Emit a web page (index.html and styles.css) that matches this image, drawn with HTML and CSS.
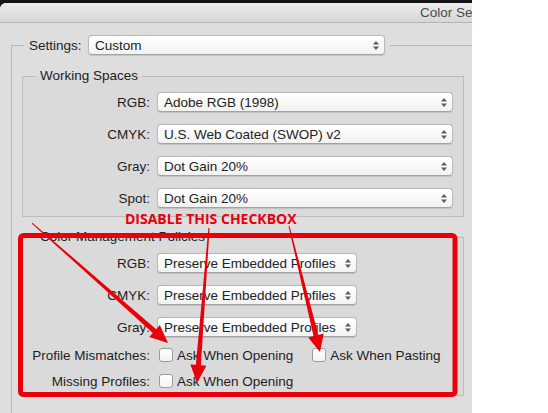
FILE: index.html
```html
<!DOCTYPE html>
<html>
<head>
<meta charset="utf-8">
<link rel="stylesheet" href="styles.css">
</head>
<body>
<div class="screen">
  <div class="window">
    <div class="titlebar">Color Settings</div>
    <fieldset class="outer">
      <legend class="settings">
        <span class="set-label">Settings:</span>
        <div class="popup popup-settings"><span>Custom</span><svg class="updown" viewBox="0 0 6 9"><path d="M0 3.5L3 0L6 3.5Z M0 5.5L3 9L6 5.5Z"/></svg></div>
      </legend>
      <fieldset class="group">
        <legend>Working Spaces</legend>
        <div class="rows">
          <span class="lbl">RGB:</span>
          <div class="popup popup-wide"><span>Adobe RGB (1998)</span><svg class="updown" viewBox="0 0 6 9"><path d="M0 3.5L3 0L6 3.5Z M0 5.5L3 9L6 5.5Z"/></svg></div>
          <span class="lbl">CMYK:</span>
          <div class="popup popup-wide"><span>U.S. Web Coated (SWOP) v2</span><svg class="updown" viewBox="0 0 6 9"><path d="M0 3.5L3 0L6 3.5Z M0 5.5L3 9L6 5.5Z"/></svg></div>
          <span class="lbl">Gray:</span>
          <div class="popup popup-wide"><span>Dot Gain 20%</span><svg class="updown" viewBox="0 0 6 9"><path d="M0 3.5L3 0L6 3.5Z M0 5.5L3 9L6 5.5Z"/></svg></div>
          <span class="lbl">Spot:</span>
          <div class="popup popup-wide"><span>Dot Gain 20%</span><svg class="updown" viewBox="0 0 6 9"><path d="M0 3.5L3 0L6 3.5Z M0 5.5L3 9L6 5.5Z"/></svg></div>
        </div>
      </fieldset>
      <fieldset class="group group-policies">
        <legend>Color Management Policies</legend>
        <div class="rows">
          <span class="lbl">RGB:</span>
          <div class="popup popup-short"><span>Preserve Embedded Profiles</span><svg class="updown" viewBox="0 0 6 9"><path d="M0 3.5L3 0L6 3.5Z M0 5.5L3 9L6 5.5Z"/></svg></div>
          <span class="lbl">CMYK:</span>
          <div class="popup popup-short"><span>Preserve Embedded Profiles</span><svg class="updown" viewBox="0 0 6 9"><path d="M0 3.5L3 0L6 3.5Z M0 5.5L3 9L6 5.5Z"/></svg></div>
          <span class="lbl">Gray:</span>
          <div class="popup popup-short"><span>Preserve Embedded Profiles</span><svg class="updown" viewBox="0 0 6 9"><path d="M0 3.5L3 0L6 3.5Z M0 5.5L3 9L6 5.5Z"/></svg></div>
        </div>
        <div class="checks">
          <span class="lbl">Profile Mismatches:</span>
          <div class="opts">
            <span class="opt"><span class="cb"></span>Ask When Opening</span>
            <span class="opt"><span class="cb"></span>Ask When Pasting</span>
          </div>
          <span class="lbl">Missing Profiles:</span>
          <div class="opts">
            <span class="opt"><span class="cb"></span>Ask When Opening</span>
          </div>
        </div>
      </fieldset>
    </fieldset>
  </div>
  <div class="note">DISABLE THIS CHECKBOX</div>
  <svg class="marks" viewBox="0 0 548 413" width="548" height="413">
    <rect x="20.5" y="235.5" width="434.5" height="159" rx="3" fill="none" stroke="#e8000b" stroke-width="5"/>
    <polygon fill="#e8000b" points="31.67,223.38 152.85,332.98 149.2,337.1 168,343 159.8,325.1 156.15,329.23 32.33,222.63"/>
    <polygon fill="#e8000b" points="208.4,227.95 195.9,364.87 190.41,364.44 197,383 206.37,365.68 200.88,365.25 209.6,228.05"/>
    <polygon fill="#e8000b" points="288.51,226.12 313.51,336.09 308.17,337.4 320,352 323.71,333.58 318.37,334.89 289.49,225.88"/>
  </svg>
</div>
</body>
</html>
```

FILE: styles.css
```css
html, body {
  margin: 0;
  padding: 0;
  background: #ffffff;
}

body {
  width: 548px;
  height: 413px;
  overflow: hidden;
  position: relative;
  font-family: "Liberation Sans", Arial, sans-serif;
  font-size: 13.5px;
  color: #1e1e1e;
}

.screen {
  width: 472px;
  height: 413px;
  background: #161616;
  overflow: hidden;
}

.window {
  margin-top: 3px;
  height: 410px;
  background: #dedede;
  border-top-left-radius: 6px;
  overflow: hidden;
}

.titlebar {
  height: 19px;
  line-height: 20px;
  padding-left: 420px;
  white-space: nowrap;
  overflow: hidden;
  color: #4a4a4a;
  background: linear-gradient(#ececec, #d6d6d6);
  border-bottom: 1px solid #b4b4b4;
}

fieldset {
  margin: 0;
  min-inline-size: 0;
  box-sizing: border-box;
}

.outer {
  margin: 12px 0 0 11px;
  width: 480px;
  padding: 0 0 30px 10px;
  border: 1px solid #b6b6b6;
}

.settings {
  display: flex;
  align-items: center;
  margin-left: 2px;
  padding: 0 5px;
  height: 20px;
}

.set-label {
  width: 55px;
  margin-right: 4px;
}

.popup {
  height: 20px;
  box-sizing: border-box;
  display: flex;
  align-items: center;
  justify-content: space-between;
  padding: 0 5px 0 6px;
  background: linear-gradient(#ffffff, #f2f2f2);
  border: 1px solid #b9b9b9;
  border-bottom-color: #a2a2a2;
  border-radius: 4px;
  box-shadow: 0 0.5px 1px rgba(0, 0, 0, 0.12);
  color: #222222;
  white-space: nowrap;
}

.popup-settings { width: 297px; }
.popup-wide { width: 296px; }
.popup-short { width: 200px; }

.updown {
  width: 6px;
  height: 9px;
  fill: #5a5a5a;
  flex: none;
}

.group {
  margin-top: 13px;
  width: 442px;
  padding: 8px 0 8px 0;
  border: 1px solid #bdbdbd;
  background: #dadada;
}

.group > legend {
  margin-left: 13px;
  padding: 0 4px;
  line-height: 16px;
  color: #222222;
}

.group-policies {
  margin-top: 12px;
  padding-bottom: 4px;
}

.rows,
.checks {
  display: grid;
  grid-template-columns: 127px auto;
  column-gap: 7px;
  align-items: center;
  justify-content: start;
}

.rows {
  row-gap: 12px;
}

.checks {
  margin-top: 8px;
  row-gap: 6px;
  grid-auto-rows: 20px;
}

.lbl {
  text-align: right;
  white-space: nowrap;
}

.opts {
  display: flex;
  align-items: center;
  gap: 19px;
  padding-left: 2px;
}

.opt {
  display: flex;
  align-items: center;
  gap: 4px;
  white-space: nowrap;
}

.cb {
  width: 14px;
  height: 14px;
  box-sizing: border-box;
  border: 1px solid #9c9c9c;
  border-radius: 3px;
  background: linear-gradient(#ffffff, #f3f3f3);
}

.note {
  position: absolute;
  left: 125px;
  top: 209px;
  font-family: "Open Sans", "Liberation Sans", sans-serif;
  font-weight: 700;
  font-size: 14px;
  color: #e8000b;
  white-space: nowrap;
}

.marks {
  position: absolute;
  left: 0;
  top: 0;
  pointer-events: none;
}
```
